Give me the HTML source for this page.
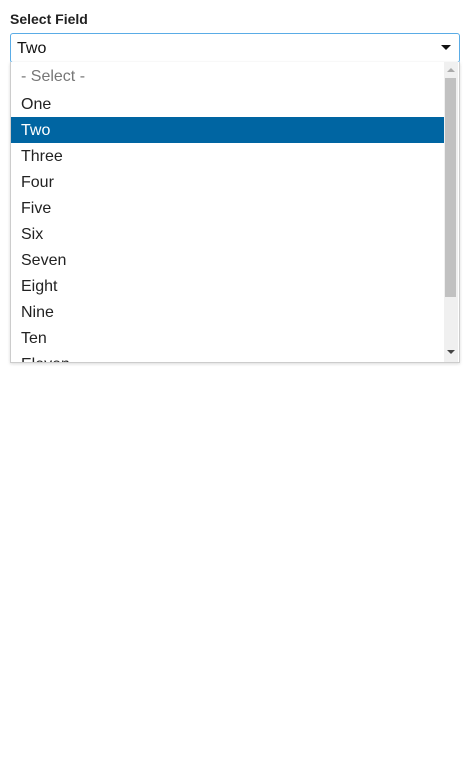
<!DOCTYPE html>
<html><head><style>
*{margin:0;padding:0;box-sizing:border-box}
body{width:470px;height:768px;background:#fff;font-family:"Liberation Sans",sans-serif;position:relative;overflow:hidden}
.lbl{position:absolute;left:10px;top:11px;font-size:14px;font-weight:bold;color:#222}
.sel{position:absolute;left:10px;top:33px;width:450px;height:30px;border:1px solid #5aace6;border-radius:3px;font-size:16px;color:#111;padding:6px 0 0 6px}
.arr{position:absolute;right:8px;top:11px;width:0;height:0;border-left:5px solid transparent;border-right:5px solid transparent;border-top:5px solid #111}
.list{position:absolute;left:10px;top:62px;width:450px;height:301px;border:1px solid #ccc;border-top:none;box-shadow:0 1px 3px rgba(0,0,0,.15);overflow:hidden;background:#fff}
.it{height:26px;line-height:28px;font-size:16px;color:#222;padding-left:10px;width:434px}
.it.g{color:#777;height:29px;line-height:29px}
.it.s{background:#0065a2;color:#fff}
.sb{position:absolute;right:1px;top:0;width:14px;height:300px;background:#f0f0f0}
.th{position:absolute;left:1px;top:16px;width:11px;height:219px;background:#c1c1c1}
.up{position:absolute;left:3px;top:6px;border-left:4px solid transparent;border-right:4px solid transparent;border-bottom:4px solid #aaa}
.dn{position:absolute;left:3px;top:288px;border-left:4px solid transparent;border-right:4px solid transparent;border-top:4px solid #444}
</style></head><body>
<div class="lbl">Select Field</div>
<div class="sel">Two<div class="arr"></div></div>
<div class="list">
<div class="it g">- Select -</div>
<div class="it">One</div>
<div class="it s">Two</div>
<div class="it">Three</div>
<div class="it">Four</div>
<div class="it">Five</div>
<div class="it">Six</div>
<div class="it">Seven</div>
<div class="it">Eight</div>
<div class="it">Nine</div>
<div class="it">Ten</div>
<div class="it">Eleven</div>
<div class="sb"><div class="up"></div><div class="th"></div><div class="dn"></div></div>
</div>
</body></html>
